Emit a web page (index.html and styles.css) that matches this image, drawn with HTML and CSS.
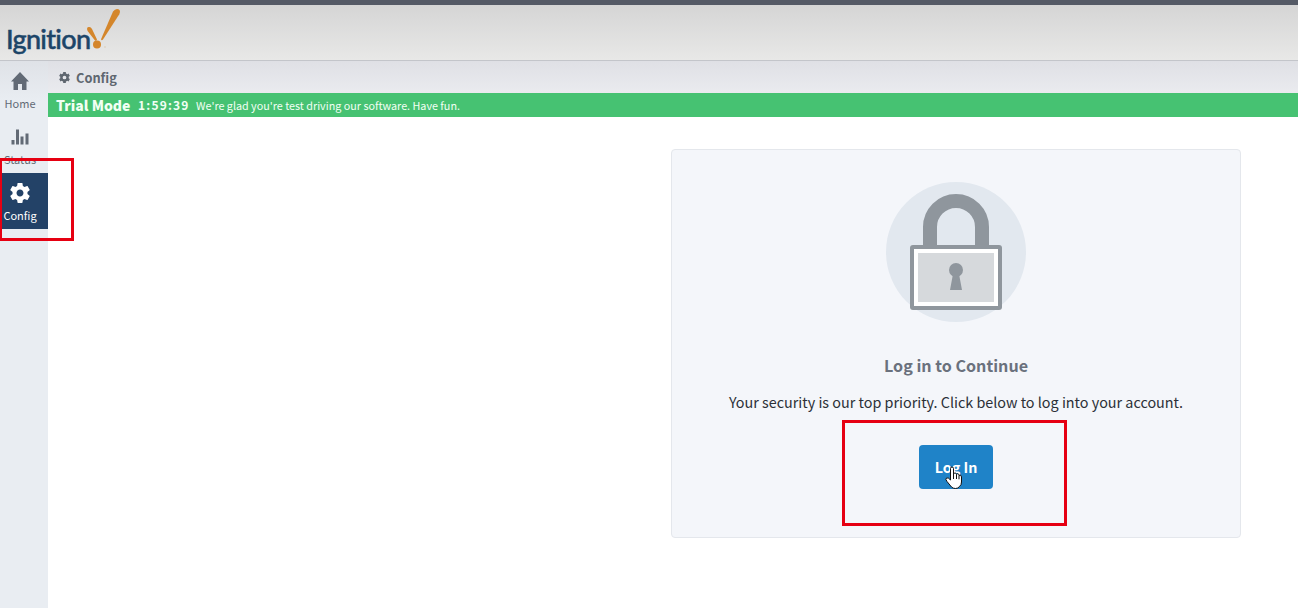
FILE: index.html
```html
<!DOCTYPE html>
<html lang="en">
<head>
    <meta charset="UTF-8">
    <meta name="viewport" content="width=device-width, initial-scale=1.0">
    <title>Ignition - Config</title>
    <link rel="stylesheet" href="styles.css">
</head>
<body>

    <header class="header">
        <svg class="logo" width="130" height="55" viewBox="0 0 130 55">
            <text class="logo-text" x="6" y="43.500" textLength="85">Ignition</text>
            <path d="M113 6.500Q115.500 3 118.500 4.200Q121 5.500 119.300 9.200L103 34.500Q101.500 36 101 34.300Z" fill="#d4862b"/>
            <path d="M87 24Q87 21.500 89.300 22Q91 22 92 24L97 34.500Q96.500 36.500 95 35.500L87.600 26Z" fill="#d4862b"/>
            <circle cx="97" cy="39.500" r="4" fill="#d4862b"/>
            <circle cx="105" cy="42" r="0.800" fill="#d8c8b2"/>
        </svg>
    </header>

    <div class="layout">
        <nav class="sidebar">
            <a class="nav-item">
                <svg width="20" height="20" viewBox="0 0 20 20" fill="currentColor"><path d="M10 1L19 10.500H16.500V19H12V13H8V19H3.500V10.500H1Z"/></svg>
                <span>Home</span>
            </a>
            <a class="nav-item">
                <svg width="20" height="20" viewBox="0 0 20 20" fill="currentColor"><path d="M1.500 13h3v4.500h-3zM6 2.500h3v15H6zM10.500 9.500h3v8h-3zM15.500 6.500h3v11h-3z"/></svg>
                <span>Status</span>
            </a>
            <a class="nav-item active">
                <svg width="24" height="24" viewBox="0 0 24 24" fill="currentColor"><path d="M19.430 12.980c.04-.32.07-.64.07-.98s-.03-.66-.07-.98l2.110-1.650c.19-.15.24-.42.12-.64l-2-3.460c-.12-.22-.39-.3-.61-.22l-2.490 1c-.52-.4-1.080-.73-1.690-.98l-.38-2.650C14.460 2.180 14.250 2 14 2h-4c-.25 0-.46.18-.49.42l-.38 2.650c-.61.25-1.170.59-1.690.98l-2.490-1c-.23-.09-.49 0-.61.22l-2 3.460c-.13.22-.07.49.12.64l2.110 1.650c-.04.32-.07.65-.07.98s.03.66.07.98l-2.110 1.650c-.19.15-.24.42-.12.64l2 3.460c.12.22.39.3.61.22l2.490-1c.52.4 1.080.73 1.690.98l.38 2.650c.03.24.24.42.49.42h4c.25 0 .46-.18.49-.42l.38-2.650c.61-.25 1.170-.59 1.690-.98l2.490 1c.23.09.49 0 .61-.22l2-3.460c.12-.22.07-.49-.12-.64l-2.110-1.650zM12 15.500c-1.930 0-3.500-1.570-3.500-3.500s1.570-3.500 3.500-3.500 3.500 1.570 3.500 3.500-1.570 3.500-3.500 3.500z"/></svg>
                <span>Config</span>
            </a>
        </nav>

        <main class="main">
            <div class="breadcrumb">
                <svg width="13" height="13" viewBox="0 0 24 24" fill="none" stroke="currentColor"><circle cx="12" cy="12" r="5.700" stroke-width="4.500"/><path d="M12 2v4M12 18v4M3.300 7l3.500 2M17.200 15l3.500 2M3.300 17l3.500-2M17.200 9l3.500-2" stroke-width="5"/></svg>
                <span>Config</span>
            </div>
            <div class="trial">
                <span class="trial-mode">Trial Mode</span>
                <span class="trial-time">1:59:39</span>
                <span class="trial-text">We're glad you're test driving our software. Have fun.</span>
            </div>
            <section class="card">
                <svg class="lock" width="140" height="140" viewBox="0 0 140 140">
                    <circle cx="70" cy="70" r="70" fill="#e2e8ef"/>
                    <path d="M44 66V45a26 26 0 0 1 52 0V66" fill="none" stroke="#8f969d" stroke-width="14"/>
                    <rect x="24" y="63" width="92" height="65" rx="3" fill="#8f969d"/>
                    <rect x="28" y="67" width="84" height="57" fill="#fff"/>
                    <rect x="32" y="71" width="76" height="49" fill="#d6d9dc"/>
                    <circle cx="70" cy="88" r="7" fill="#8f969d"/>
                    <path d="M67 92h6l3 16H64z" fill="#8f969d"/>
                </svg>
                <h1>Log in to Continue</h1>
                <p>Your security is our top priority. Click below to log into your account.</p>
                <button type="button">Log In</button>
            </section>
        </main>
    </div>

    <!-- Highlights and pointer on top of the page -->
    <div class="highlight highlight-config"></div>
    <div class="highlight highlight-login"></div>
    <svg class="pointer" width="18" height="24" viewBox="0 0 18 24"><path d="M5.500 13V2.500Q5.500 1 7 1T8.500 2.500V8Q9 6.800 10.200 7T11.500 8.500Q12 7.500 13 7.800T14 9.300Q16.500 8.500 16.500 11V16Q16.500 19 14.500 20.500Q13 22.500 10.500 22.500T6.500 21L2 15.500Q0 13 1.500 12T5.500 14Z" fill="#fff" stroke="#111" stroke-width="1"/><path d="M8.500 8v5M11.500 8.500v4.500M14 9.300v4" stroke="#111" stroke-width="1" fill="none"/></svg>

</body>
</html>
```
FILE: styles.css
```css
* {
    box-sizing: border-box;
}
body {
    font-family: "Noto Sans CJK SC", "Noto Sans", sans-serif;
    margin: 0;
    height: 608px;
    overflow: hidden;
    position: relative;
    background-color: #fff;
    display: flex;
    flex-direction: column;
}
.header {
    height: 61px;
    flex-shrink: 0;
    border-top: 5px solid #555a66;
    border-bottom: 1px solid #c3c5ca;
    background: linear-gradient(#d5d5d5, #e8e8e7);
}
.logo {
    display: block;
}
.logo-text {
    font-family: Lato, sans-serif;
    font-size: 27px;
    font-weight: 500;
    font-variant-ligatures: none;
    fill: #1c4568;
    stroke: #1c4568;
    stroke-width: 0.5px;
}
.layout {
    display: flex;
    flex: 1;
}
.sidebar {
    width: 48px;
    background: linear-gradient(#dfe2e7, #e9edf2 40px);
}
.nav-item {
    display: flex;
    flex-direction: column;
    align-items: center;
    width: 48px;
    height: 56px;
    padding: 8px 8px 0 0;
    color: #626a75;
    font-size: 11px;
    line-height: 16px;
}
.nav-item svg {
    height: 24px;
    margin-bottom: 2px;
}
.nav-item.active {
    background-color: #234267;
    color: #fff;
}
.main {
    flex: 1;
}
.breadcrumb {
    display: flex;
    align-items: center;
    gap: 5px;
    height: 32px;
    padding-left: 10px;
    background: linear-gradient(#dfe0e5, #eaebef);
    color: #5f6770;
    font-size: 12.800px;
    font-weight: bold;
}
.trial {
    display: flex;
    align-items: center;
    height: 24px;
    padding-left: 8px;
    background-color: #46c272;
    color: #f2fff4;
    line-height: 24px;
}
.trial-mode {
    width: 82px;
    font-size: 14px;
    font-weight: 900;
}
.trial-time {
    width: 58px;
    font-size: 12px;
    font-weight: bold;
    letter-spacing: 1.200px;
}
.trial-text {
    padding-bottom: 1px;
    font-size: 10.780px;
}
.card {
    display: flex;
    flex-direction: column;
    align-items: center;
    width: 570px;
    height: 389px;
    margin: 32px 0 0 623px;
    padding-top: 32px;
    background-color: #f4f6fa;
    border: 1px solid #e4e7ec;
    border-radius: 4px;
}
.card h1 {
    margin: 31px 0 0;
    font-size: 16.100px;
    line-height: 24px;
    color: #6a717d;
}
.card p {
    margin: 13px 0 0;
    font-size: 14.360px;
    line-height: 24px;
    color: #2b3037;
}
.card button {
    width: 74px;
    height: 44px;
    margin-top: 31px;
    padding: 0 0 2px;
    border: none;
    border-radius: 4px;
    background-color: #1f83c8;
    color: #fff;
    font-family: inherit;
    font-size: 14.300px;
    font-weight: bold;
}
.highlight {
    position: absolute;
    border: 3px solid #e60012;
}
.highlight-config {
    left: -1px;
    top: 158px;
    width: 75px;
    height: 83px;
}
.highlight-login {
    left: 842px;
    top: 420px;
    width: 225px;
    height: 106px;
}
.pointer {
    position: absolute;
    left: 945px;
    top: 466px;
}
```
